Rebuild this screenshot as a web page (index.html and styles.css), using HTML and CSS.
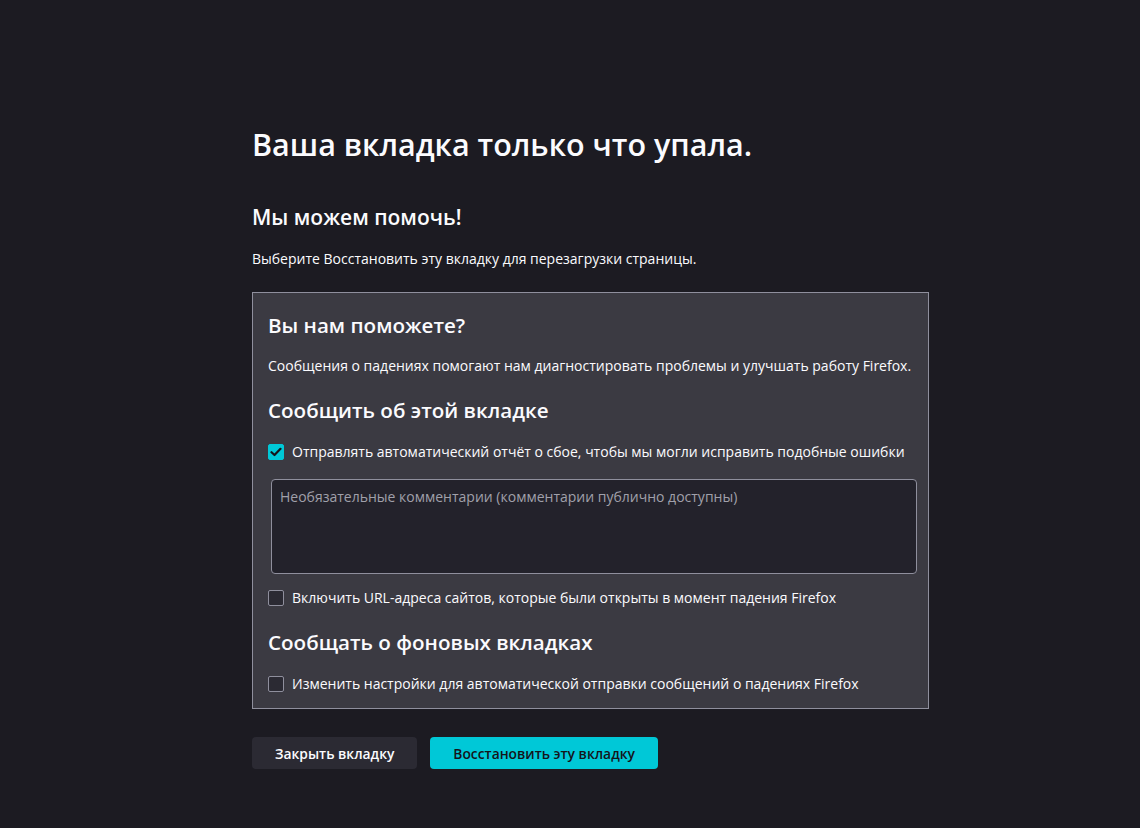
FILE: index.html
```html
<!DOCTYPE html>
<html lang="ru">
  <head>
    <meta charset="UTF-8" />
    <meta name="viewport" content="width=device-width, initial-scale=1.0" />
    <title>Вкладка упала</title>
    <link rel="stylesheet" href="styles.css">
  </head>
  <body>
    <div class="container">
      <h1 class="title">Ваша вкладка только что упала.</h1>
      <h2 class="subtitle">Мы можем помочь!</h2>
      <p class="hint">Выберите Восстановить эту вкладку для перезагрузки страницы.</p>

      <div class="report-box">
        <h2 class="box-title">Вы нам поможете?</h2>
        <p class="box-text">Сообщения о падениях помогают нам диагностировать проблемы и улучшать работу Firefox.</p>

        <h2 class="box-title">Сообщить об этой вкладке</h2>
        <label class="check">
          <span class="box checked">
            <svg width="12" height="10" viewBox="0 0 12 10"><path d="M1.5 5.2 L4.5 8 L10.5 1.8" fill="none" stroke="#15141a" stroke-width="2.2" stroke-linecap="round" stroke-linejoin="round"/></svg>
          </span>
          Отправлять автоматический отчёт о сбое, чтобы мы могли исправить подобные ошибки
        </label>
        <textarea class="comments" placeholder="Необязательные комментарии (комментарии публично доступны)"></textarea>
        <label class="check">
          <span class="box"></span>
          Включить URL-адреса сайтов, которые были открыты в момент падения Firefox
        </label>

        <h2 class="box-title">Сообщать о фоновых вкладках</h2>
        <label class="check">
          <span class="box"></span>
          Изменить настройки для автоматической отправки сообщений о падениях Firefox
        </label>
      </div>

      <div class="buttons">
        <button type="button" class="btn">Закрыть вкладку</button>
        <button type="button" class="btn primary">Восстановить эту вкладку</button>
      </div>
    </div>
  </body>
</html>
```

FILE: styles.css
```css
body {
  margin: 0;
  background-color: #1c1b22;
  color: #fbfbfe;
  font-family: "Open Sans", "Noto Sans", sans-serif;
  font-size: 14px;
}
.container {
  width: 677px;
  margin-left: 252px;
  padding-top: 118px;
}
.title {
  font-size: 30.5px;
  font-weight: 600;
  line-height: 52px;
  margin: 0;
}
.subtitle {
  font-size: 21px;
  font-weight: 600;
  line-height: 30px;
  margin: 32px 0 0 0;
}
.hint {
  margin: 16px 0 0 0;
  line-height: 22px;
}
.report-box {
  margin-top: 22px;
  background-color: #3b3a42;
  border: 1px solid #8f8f9d;
  padding: 15px 15px 13px 15px;
}
.box-title {
  font-size: 20.6px;
  font-weight: 600;
  line-height: 34px;
  margin: 16px 0 0 0;
}
.box-title:first-child {
  margin-top: 0;
}
.box-text {
  margin: 13px 0 0 0;
  line-height: 22px;
}
.check {
  display: flex;
  align-items: center;
  gap: 8px;
  line-height: 22px;
  margin-top: 14px;
}
.comments + .check {
  margin-top: 13px;
}
.box {
  width: 14px;
  height: 14px;
  border: 1px solid #8f8f9d;
  border-radius: 2px;
  background-color: #2b2a33;
  display: flex;
  align-items: center;
  justify-content: center;
  flex: none;
}
.box.checked {
  background-color: #00c8d7;
  border-color: #00c8d7;
}
.comments {
  display: block;
  box-sizing: border-box;
  width: 646px;
  height: 95px;
  margin: 16px 0 0 3px;
  padding: 7px 8px;
  background-color: #23222b;
  border: 1px solid #8f8f9d;
  border-radius: 4px;
  color: #fbfbfe;
  font-family: inherit;
  font-size: 14px;
  line-height: 20px;
  resize: none;
}
.comments::placeholder {
  color: #a0a0aa;
}
.buttons {
  display: flex;
  gap: 13px;
  margin-top: 28px;
}
.btn {
  height: 32px;
  padding: 0 23px;
  border: none;
  border-radius: 4px;
  background-color: #2b2a33;
  color: #fbfbfe;
  font-family: inherit;
  font-size: 13.8px;
  font-weight: 600;
  cursor: pointer;
}
.btn.primary {
  background-color: #00c8d7;
  color: #15141a;
}
```
